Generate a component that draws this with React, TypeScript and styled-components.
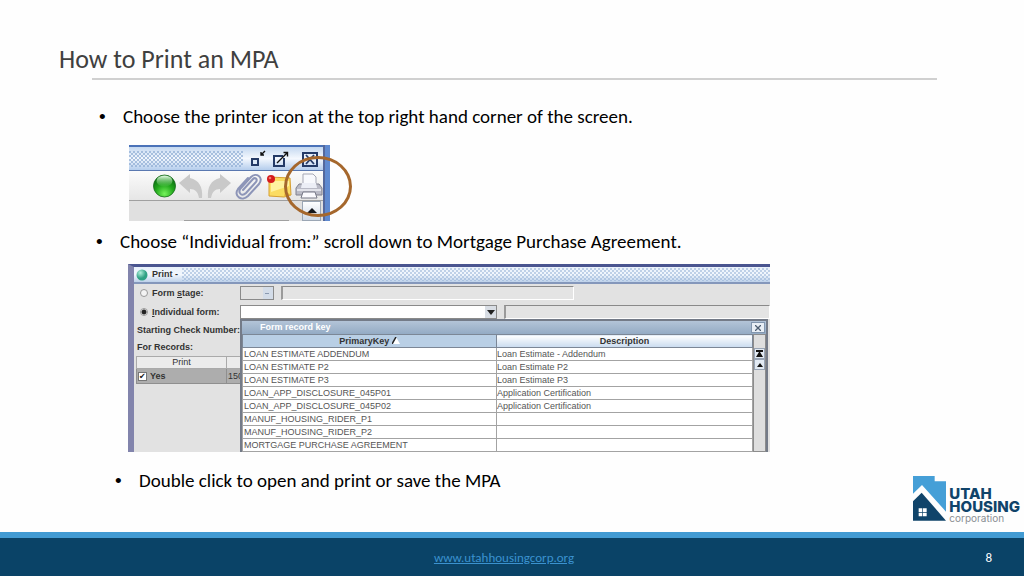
import React from "react";
import styled, { createGlobalStyle } from "styled-components";

const GlobalStyle = createGlobalStyle`
  *, *::before, *::after { box-sizing: border-box; }
  body { margin: 0; background: #fefefe; font-family: Carlito, Lato, sans-serif; color: #000; }
`;

const Page = styled.div`
  min-height: 100vh;
  display: flex;
  flex-direction: column;
`;
const Main = styled.main`
  flex: 1;
  padding-top: 43px;
`;
const Title = styled.h1`
  margin: 0;
  padding-left: 59px;
  font-size: 26px;
  line-height: 32px;
  font-weight: 400;
  color: #404040;
`;
const Rule = styled.hr`
  margin: 3px 87px 0 92px;
  border: 0;
  height: 2px;
  background: #d0d0d0;
`;
const Steps = styled.ul`
  list-style: none;
  margin: 0;
  padding: 25px 0 0;
`;
const Step = styled.li<{ $indent: number }>`
  padding-left: ${(p) => p.$indent}px;
  font-size: 19px;
  line-height: 24px;
`;
const StepLine = styled.div`
  display: flex;
  gap: 16px;
`;
const Bullet = styled.span`
  width: 8px;
  font-family: "Liberation Sans", Arial, sans-serif;
`;
const LastRow = styled.div`
  display: flex;
  justify-content: space-between;
  align-items: flex-start;
  padding: 17px 4px 0 0;
`;

/* Toolbar figure */
const ToolbarFigure = styled.div`
  position: relative;
  width: 201px;
  margin: 16px 0 9px 129px;
  display: flex;
  background: #e0e0e0;
`;
const ToolbarWindow = styled.div`
  flex: 1;
`;
const WindowEdge = styled.div`
  width: 7px;
  border-left: 2px solid #54689c;
  background: #5f8ad0;
`;
const dots = `
  radial-gradient(circle at 1px 1px, #8fadd4 1px, transparent 1px) 0 0 / 4px 4px,
  radial-gradient(circle at 1px 1px, #8fadd4 1px, transparent 1px) 2px 2px / 4px 4px`;
const ToolbarTitle = styled.div`
  height: 26px;
  display: flex;
  align-items: center;
  gap: 6px;
  padding-right: 4px;
  border-top: 2px solid #4a72b8;
  border-bottom: 1px solid #5a78b0;
  background: linear-gradient(#c4d8f0, #f4f8fe 50%, #b4cdec);
`;
const Dots = styled.div`
  flex: 1;
  height: 16px;
  background: ${dots};
  opacity: 0.7;
`;
const PlainButton = styled.button`
  display: block;
  border: 0;
  padding: 0;
  background: none;
  line-height: 0;
`;
const IconRow = styled.div`
  height: 30px;
  display: flex;
  align-items: center;
  justify-content: flex-end;
  gap: 3px;
  border-bottom: 1px solid #a0a0a0;
  background: linear-gradient(#fbfbfb, #e6e6e6);
`;
const ToolbarBody = styled.div`
  height: 20px;
  display: flex;
  justify-content: flex-end;
  gap: 13px;
  padding-right: 2px;
`;
const BodyLine = styled.div`
  width: 105px;
  border-bottom: 1px solid #a0a0a0;
`;
const ScrollUp = styled.button`
  width: 19px;
  height: 20px;
  padding: 0;
  border: 1px solid #9ba6b4;
  background: linear-gradient(#fff, #cfd9e6);
  line-height: 0;
`;
const Highlight = styled.div`
  position: absolute;
  left: 155px;
  top: 11px;
  width: 68px;
  height: 61px;
  border: 3px solid #a5672c;
  border-radius: 50%;
`;

/* Print dialog figure */
const Dialog = styled.div`
  position: relative;
  max-width: 642px;
  height: 188px;
  margin: 10px 0 0 128px;
  overflow: hidden;
  border-left: 6px solid #8284ac;
  border-top: 3px solid #4a5590;
  background: #e2e2e2;
  font-family: "Liberation Sans", Arial, sans-serif;
  font-size: 9px;
  line-height: 13px;
  color: #333;
`;
const DialogTitle = styled.div`
  height: 17px;
  display: flex;
  align-items: center;
  gap: 4px;
  padding-left: 2px;
  border-bottom: 2px solid #8497bb;
  background: linear-gradient(#e9f1fb, #f2f7fd 50%, #bdd1ea);
  font-weight: 700;
`;
const DialogDots = styled.div`
  flex: 1;
  height: 13px;
  background: ${dots};
  opacity: 0.5;
`;
const FormGrid = styled.div`
  display: grid;
  grid-template-columns: 106px 1fr;
  row-gap: 5px;
  padding-top: 2px;
`;
const RadioLabel = styled.label`
  display: flex;
  align-items: center;
  gap: 4px;
  padding-left: 6px;
  font-weight: 700;
`;
const Radio = styled.input`
  appearance: none;
  width: 8px;
  height: 8px;
  margin: 0;
  border: 1px solid #999;
  border-radius: 50%;
  background: #f4f4f4;
  &:checked { background: radial-gradient(#222 2px, #f4f4f4 3px); }
`;
const Fields = styled.div`
  display: flex;
  gap: 7px;
`;
const Select = styled.select<{ $w: number; $off?: boolean }>`
  appearance: none;
  width: ${(p) => p.$w}px;
  height: 14px;
  margin: 0;
  padding: 0;
  border: 1px solid #8a8a8a;
  border-radius: 0;
  opacity: 1;
  font: inherit;
  background: ${(p) =>
    p.$off
      ? "linear-gradient(#8a99b0, #8a99b0) right 4px center / 4px 1px no-repeat, linear-gradient(#d3dce8, #d3dce8) right / 10px 100% no-repeat, #e2e2e2"
      : "linear-gradient(#d8dde4, #d8dde4) right / 11px 100% no-repeat, #fff"};
`;
const SelectWrap = styled.span<{ $w: number }>`
  position: relative;
  display: flex;
  width: ${(p) => p.$w}px;
`;
const Arrow = styled.svg`
  position: absolute;
  right: 2px;
  top: 5px;
  pointer-events: none;
`;
const Box = styled.input<{ $w?: number }>`
  width: ${(p) => (p.$w ? p.$w + "px" : "auto")};
  flex: ${(p) => (p.$w ? "none" : "1")};
  min-width: 0;
  height: 14px;
  padding: 0;
  border: 1px solid #fff;
  border-top-color: #8a8a8a;
  border-left: 2px solid #9a9a9a;
  background: #e4e4e4;
  font: inherit;
`;
const SideText = styled.div`
  padding: 6px 0 0 3px;
  font-weight: 700;
  line-height: 11px;
`;
const Records = styled.table`
  width: 132px;
  margin: 3px 0 0 2px;
  table-layout: fixed;
  border-collapse: collapse;
  border-top: 1px solid #999;
  th { height: 12px; padding: 0; font-weight: 400; line-height: 11px; background: #ececec; border: 1px solid #aaa; }
  th:first-child { width: 90px; }
  td { height: 15px; padding: 0 1px; line-height: 13px; background: #adadad; border: 1px solid #8f8f8f; }
`;
const CheckLabel = styled.label`
  display: flex;
  align-items: center;
  gap: 3px;
  font-weight: 700;
`;
const Check = styled.input`
  appearance: none;
  width: 9px;
  height: 9px;
  margin: 0;
  border: 1px solid #777;
  background: #fff;
  line-height: 8px;
  &:checked::after { content: "✔"; display: block; font: 8px/8px "DejaVu Sans", sans-serif; color: #111; }
`;
const Popup = styled.div`
  position: absolute;
  left: 106px;
  top: 52px;
  right: 2px;
  height: 136px;
  border: 2px solid #747b88;
  border-bottom: 0;
  background: #dcdcdc;
`;
const PopupTitle = styled.div`
  height: 13px;
  display: flex;
  align-items: center;
  justify-content: space-between;
  padding: 0 1px 0 18px;
  background: linear-gradient(#b3c4d8, #94abc4);
  color: #fff;
  font-weight: 700;
`;
const Close = styled.button`
  width: 14px;
  height: 11px;
  padding: 0;
  border: 1px solid #8296ae;
  background: #e8eef5;
  line-height: 0;
`;
const PopupBody = styled.div`
  display: flex;
`;
const Keys = styled.table`
  flex: 1;
  border-collapse: collapse;
  table-layout: fixed;
  background: #fff;
  th { height: 13px; padding: 0; line-height: 12px; border: 1px solid #7c8796; background: linear-gradient(#fff, #c9dbef); }
  th:first-child { width: 254px; background: #b9cfe5; }
  td { height: 13px; padding: 0 1px; line-height: 12px; border: 1px solid #a3a3a3; color: #555; white-space: nowrap; }
  td + td { padding: 0; }
`;
const Scrollbar = styled.div`
  width: 13px;
  padding-top: 13px;
  border: 1px solid #8c8c8c;
  background: #dedede;
`;
const ScrollButton = styled.button`
  display: block;
  width: 11px;
  height: 11px;
  padding: 0;
  border: 1px solid #98a4b5;
  background: #e2eaf3;
  line-height: 0;
`;

/* Brand and footer */
const Brand = styled.div`
  display: flex;
  gap: 2px;
  padding-top: 7px;
`;
const BrandText = styled.div`
  padding-top: 11px;
  font-family: Inter, sans-serif;
  font-size: 15px;
  line-height: 13px;
  font-weight: 800;
  color: #10446a;
`;
const BrandSub = styled.div`
  font-size: 10px;
  line-height: 10px;
  font-weight: 400;
  color: #8a8f94;
`;
const Footer = styled.footer`
  height: 44px;
  display: grid;
  grid-template-columns: 1fr auto 1fr;
  align-items: center;
  padding: 0 32px 0 16px;
  border-top: 6px solid #429bd3;
  background: #0a4367;
  font-size: 13px;
  color: #fff;
`;
const SiteLink = styled.a`
  grid-column: 2;
  color: #3b92cf;
`;
const PageNumber = styled.span`
  text-align: right;
`;

const rows: [string, string][] = [
  ["LOAN ESTIMATE ADDENDUM", "Loan Estimate - Addendum"],
  ["LOAN ESTIMATE P2", "Loan Estimate P2"],
  ["LOAN ESTIMATE P3", "Loan Estimate P3"],
  ["LOAN_APP_DISCLOSURE_045P01", "Application Certification"],
  ["LOAN_APP_DISCLOSURE_045P02", "Application Certification"],
  ["MANUF_HOUSING_RIDER_P1", ""],
  ["MANUF_HOUSING_RIDER_P2", ""],
  ["MORTGAGE PURCHASE AGREEMENT", ""],
];

const ToolbarShot = () => (
  <ToolbarFigure>
    <ToolbarWindow>
      <ToolbarTitle>
        <Dots />
        <PlainButton aria-label="Minimize">
          <svg width="17" height="18" viewBox="0 0 17 18" fill="none" stroke="#243a66">
            <rect x="3" y="9" width="6" height="6" strokeWidth="2" fill="#dce8f6" />
            <path d="M16 1 12 5M12 2v3h3" stroke="#111" strokeWidth="1.4" />
          </svg>
        </PlainButton>
        <PlainButton aria-label="Detach">
          <svg width="17" height="18" viewBox="0 0 17 18" fill="none" stroke="#243a66">
            <path d="M11 6H2v10h10V8" strokeWidth="2" />
            <path d="M5 13 15 3M11.500 2.500H15.500V6.500" stroke="#111" strokeWidth="1.400" />
          </svg>
        </PlainButton>
        <PlainButton aria-label="Close">
          <svg width="24" height="18" viewBox="0 0 24 18" fill="none" stroke="#243a66">
            <rect x="8" y="3" width="14" height="13" strokeWidth="2" />
            <path d="m11 5 8 9M19 5l-8 9" strokeWidth="1.800" />
          </svg>
        </PlainButton>
      </ToolbarTitle>
      <IconRow>
        <PlainButton aria-label="Status">
          <svg width="24" height="26" viewBox="0 0 24 26">
            <defs>
              <radialGradient id="green" cx=".5" cy=".85" r=".75">
                <stop offset="0" stopColor="#75f35c" />
                <stop offset=".55" stopColor="#22a81c" />
                <stop offset="1" stopColor="#0b6f12" />
              </radialGradient>
              <linearGradient id="shine" x2="0" y2="1">
                <stop stopColor="#eaffea" />
                <stop offset="1" stopColor="#62c65c" stopOpacity=".2" />
              </linearGradient>
            </defs>
            <circle cx="12.500" cy="13" r="11" fill="url(#green)" stroke="#176b1b" strokeWidth=".8" />
            <ellipse cx="12.500" cy="8" rx="8" ry="5.500" fill="url(#shine)" />
          </svg>
        </PlainButton>
        <PlainButton aria-label="Undo">
          <svg width="24" height="26" viewBox="0 0 24 26">
            <path d="M0 10 11 1v4c9 2 13 9 12 20h-3c-1-6-4-9-9-9v4Z" fill="#c9c9c9" />
          </svg>
        </PlainButton>
        <PlainButton aria-label="Redo">
          <svg width="25" height="26" viewBox="0 0 25 26">
            <path d="M25 10 14 1v4C5 7 1 14 2 25h3c1-6 4-9 9-9v4Z" fill="#c9c9c9" />
          </svg>
        </PlainButton>
        <PlainButton aria-label="Attach">
          <svg width="29" height="28" viewBox="0 0 29 28" fill="none" stroke="#8d95b8" strokeWidth="2" strokeLinecap="round">
            <path d="M9 18 19 7c2-2 5 0 3 3L12 21c-4 4-9 0-5-5L17 5c5-5 13 0 8 7L14 24c-6 6-15 0-10-7L14 6" />
          </svg>
        </PlainButton>
        <PlainButton aria-label="Note">
          <svg width="26" height="26" viewBox="0 0 26 26">
            <path d="M3 4 24 5l1 17-7 2-15-1Z" fill="#fbdc62" stroke="#d69f31" />
            <path d="M5 8h18v5L5 19Z" fill="#fff2a0" />
            <path d="m18 24 1-6 6 4Z" fill="#e8b63d" />
            <circle cx="5" cy="6" r="4" fill="#d51b1d" />
            <circle cx="4" cy="5" r="1.300" fill="#f27b70" />
          </svg>
        </PlainButton>
        <PlainButton aria-label="Print">
          <svg width="28" height="26" viewBox="0 0 28 26">
            <path d="M8 13V1h10l3 3v9Z" fill="#f8f9fd" stroke="#a5a7b4" />
            <path d="m4 11-3 4v7h26v-7l-3-4Z" fill="#b9bac6" stroke="#80818f" />
            <path d="M7 10h14l1 5H6Z" fill="#eceef6" />
            <path d="M2 17h24" stroke="#f0f0f6" strokeWidth="1.500" />
            <path d="M8 19h12l2 6H6Z" fill="#fafafe" stroke="#777987" />
          </svg>
        </PlainButton>
      </IconRow>
      <ToolbarBody>
        <BodyLine />
        <ScrollUp aria-label="Scroll up">
          <svg width="10" height="6" viewBox="0 0 10 6"><path d="M0 5 5 0l5 5Z" fill="#15171c" /></svg>
        </ScrollUp>
      </ToolbarBody>
    </ToolbarWindow>
    <WindowEdge />
    <Highlight />
  </ToolbarFigure>
);

const PrintDialog = () => (
  <Dialog>
    <DialogTitle>
      <svg width="12" height="12" viewBox="0 0 12 12">
        <defs>
          <radialGradient id="teal" cx=".35" cy=".3">
            <stop stopColor="#b2f0dc" />
            <stop offset="1" stopColor="#2fa184" />
          </radialGradient>
        </defs>
        <circle cx="6" cy="6" r="5.500" fill="url(#teal)" />
      </svg>
      Print -
      <DialogDots />
    </DialogTitle>
    <FormGrid>
      <RadioLabel>
        <Radio type="radio" name="scope" />
        <span>Form <u>s</u>tage:</span>
      </RadioLabel>
      <Fields>
        <Select $w={34} $off disabled aria-label="Form stage" />
        <Box $w={293} disabled aria-label="Form stage name" />
      </Fields>
      <RadioLabel>
        <Radio type="radio" name="scope" defaultChecked />
        <span><u>I</u>ndividual form:</span>
      </RadioLabel>
      <Fields>
        <SelectWrap $w={257}>
          <Select $w={257} aria-label="Individual form" />
          <Arrow width="8" height="5" viewBox="0 0 8 5"><path d="M0 0h8L4 5Z" fill="#222" /></Arrow>
        </SelectWrap>
        <Box disabled aria-label="Individual form name" />
      </Fields>
    </FormGrid>
    <SideText>Starting Check Number:</SideText>
    <SideText>For Records:</SideText>
    <Records>
      <thead>
        <tr><th>Print</th><th /></tr>
      </thead>
      <tbody>
        <tr>
          <td><CheckLabel><Check type="checkbox" defaultChecked />Yes</CheckLabel></td>
          <td>150</td>
        </tr>
      </tbody>
    </Records>
    <Popup>
      <PopupTitle>
        Form record key
        <Close aria-label="Close">
          <svg width="6" height="6" viewBox="0 0 6 6"><path d="m0 0 6 6M6 0 0 6" stroke="#4e5e72" strokeWidth="1.300" /></svg>
        </Close>
      </PopupTitle>
      <PopupBody>
        <Keys>
          <thead>
            <tr>
              <th>
                PrimaryKey{" "}
                <svg width="8" height="7" viewBox="0 0 8 7"><path d="M4 0 8 7H1Z" fill="#fff" /><path d="M0 7 4 0" stroke="#222" strokeWidth="1.500" /></svg>
              </th>
              <th>Description</th>
            </tr>
          </thead>
          <tbody>
            {rows.map(([key, description]) => (
              <tr key={key}>
                <td>{key}</td>
                <td>{description}</td>
              </tr>
            ))}
          </tbody>
        </Keys>
        <Scrollbar>
          <ScrollButton aria-label="Scroll to top">
            <svg width="7" height="7" viewBox="0 0 7 7"><path d="M0 0h7v2H0ZM3 2h1l3 5H0Z" fill="#111" /></svg>
          </ScrollButton>
          <ScrollButton aria-label="Scroll up">
            <svg width="6" height="4" viewBox="0 0 6 4"><path d="M0 4 3 0l3 4Z" fill="#111" /></svg>
          </ScrollButton>
        </Scrollbar>
      </PopupBody>
    </Popup>
  </Dialog>
);

export default function App() {
  return (
    <Page>
      <GlobalStyle />
      <Main>
        <Title>How to Print an MPA</Title>
        <Rule />
        <Steps>
          <Step $indent={99}>
            <StepLine><Bullet>•</Bullet>Choose the printer icon at the top right hand corner of the screen.</StepLine>
          </Step>
        </Steps>
        <ToolbarShot />
        <Step as="div" $indent={96}>
          <StepLine><Bullet>•</Bullet>Choose “Individual from:” scroll down to Mortgage Purchase Agreement.</StepLine>
        </Step>
        <PrintDialog />
        <LastRow>
          <Step as="div" $indent={115}>
            <StepLine><Bullet>•</Bullet>Double click to open and print or save the MPA</StepLine>
          </Step>
          <Brand>
            <svg width="34" height="45" viewBox="0 0 102 135">
              <path d="M0 0h65v16h34v91L27 27 0 53Z" fill="#459fd7" />
              <path d="M0 76 26 50l73 84H0Z" fill="#10446a" />
              <path d="M17 97h11v11H17ZM30 97h11v11H30ZM17 110h11v11H17ZM30 110h11v11H30Z" fill="#fff" />
            </svg>
            <BrandText>
              UTAH
              <br />
              HOUSING
              <BrandSub>corporation</BrandSub>
            </BrandText>
          </Brand>
        </LastRow>
      </Main>
      <Footer>
        <SiteLink href="http://www.utahhousingcorp.org">www.utahhousingcorp.org</SiteLink>
        <PageNumber>8</PageNumber>
      </Footer>
    </Page>
  );
}
